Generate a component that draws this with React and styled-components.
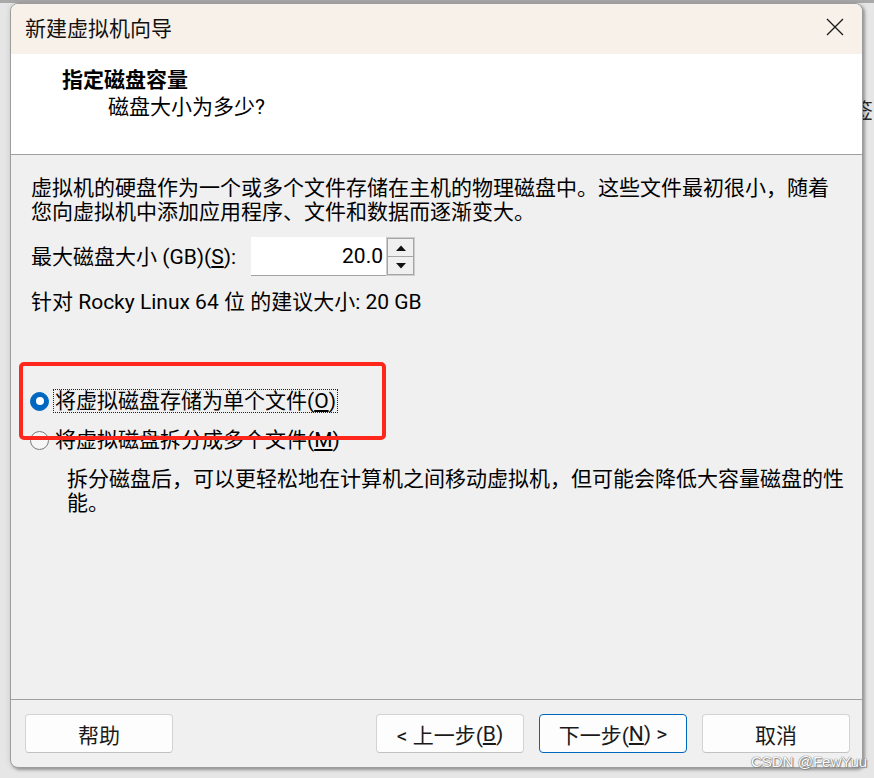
import React from 'react';
import styled, { createGlobalStyle } from 'styled-components';

const Global = createGlobalStyle`
  html, body { margin: 0; padding: 0; background: #e3e3e3; }
  body {
    width: 874px; height: 778px; overflow: hidden;
    font-family: Roboto, "Noto Sans CJK SC", sans-serif;
    -webkit-font-smoothing: antialiased;
  }
`;

const Desktop = styled.div`
  position: relative;
  width: 874px;
  height: 778px;
  box-sizing: border-box;
  padding: 3px 0 0 10px;
  background: linear-gradient(#a9a9a9 0 3px, #e6e6e6 3px);
`;

const BehindText = styled.span`
  position: absolute;
  left: 852px;
  top: 96px;
  font-size: 21px;
  line-height: 26px;
  color: #2a2a2a;
  font-family: "Noto Sans CJK SC", sans-serif;
`;

const Window = styled.div`
  position: relative;
  z-index: 1;
  width: 853px;
  height: 765px;
  box-sizing: border-box;
  border: 1px solid #9d9d9d;
  border-radius: 8px;
  overflow: hidden;
  display: flex;
  flex-direction: column;
  background: #f0f0f0;
  box-shadow: 2px 2px 3px rgba(0, 0, 0, 0.3), 0 0 6px rgba(0, 0, 0, 0.12);
`;

const TitleBar = styled.div`
  height: 50px;
  flex: none;
  box-sizing: border-box;
  display: flex;
  align-items: center;
  padding: 0 4px 4px 14px;
  background: #f8f1ea;
  font-size: 21px;
  color: #111;
`;

const TitleText = styled.span`
  line-height: 26px;
  font-family: "Noto Sans CJK SC", sans-serif;
`;

const CloseBtn = styled.div`
  margin-left: auto;
  width: 46px;
  height: 40px;
  display: flex;
  align-items: center;
  justify-content: center;
`;

const Header = styled.div`
  height: 101px;
  flex: none;
  box-sizing: border-box;
  background: #fff;
  border-bottom: 1px solid #a0a0a0;
  padding: 10px 0 0 51px;
  font-size: 21px;
  color: #000;
`;

const Heading = styled.div`
  font-weight: 700;
  line-height: 29px;
  font-family: "Noto Sans CJK SC", sans-serif;
`;

const SubHeading = styled.div`
  padding-left: 46px;
  line-height: 29px;
`;

const Body = styled.div`
  position: relative;
  flex: 1;
  padding: 21px 0 0 20px;
  font-size: 21px;
  color: #000;
`;

const Para = styled.div`
  line-height: 24px;
  white-space: nowrap;
  margin-top: ${p => p.$mt || 0}px;
  padding-left: ${p => p.$indent || 0}px;
`;

const SizeRow = styled.div`
  display: flex;
  align-items: center;
  margin-top: 13px;
  height: 39px;
`;

const SizeLabel = styled.span`
  width: 220px;
  white-space: nowrap;
  line-height: 24px;
`;

const SpinInput = styled.div`
  width: 135px;
  height: 39px;
  box-sizing: border-box;
  background: #fff;
  border-bottom: 1px solid #a3a3a3;
  display: flex;
  align-items: center;
  justify-content: flex-end;
  padding-right: 3px;
  font-size: 21px;
`;

const SpinButtons = styled.div`
  width: 29px;
  height: 39px;
  box-sizing: border-box;
  border: 1px solid #cdcdcd;
  display: flex;
  flex-direction: column;
`;

const SpinBtn = styled.div`
  flex: 1;
  border: 1px solid #a6a6a6;
  margin-top: ${p => (p.$down ? '-1px' : '0')};
  background: #f0f0f0;
  display: flex;
  align-items: center;
  justify-content: center;
`;

const RadioGroup = styled.div`
  margin-top: 74px;
  display: flex;
  flex-direction: column;
  gap: 13px;
`;

const RadioRow = styled.div`
  display: flex;
  align-items: center;
  height: 26px;
  margin-left: -1px;
`;

const RadioCircle = styled.span`
  width: 19px;
  height: 19px;
  box-sizing: border-box;
  border-radius: 50%;
  flex: none;
  display: flex;
  align-items: center;
  justify-content: center;
  background: ${p => (p.$checked ? '#0067c0' : '#f6f6f6')};
  border: 1px solid ${p => (p.$checked ? '#0067c0' : '#7a7a7a')};
  &::after {
    content: '';
    display: ${p => (p.$checked ? 'block' : 'none')};
    width: 8px;
    height: 8px;
    border-radius: 50%;
    background: #fff;
  }
`;

const RadioLabel = styled.span`
  margin-left: 4px;
  padding: 0 1px;
  line-height: 22px;
  white-space: nowrap;
  border: 1px ${p => (p.$focused ? 'dotted #222' : 'solid transparent')};
`;

const Highlight = styled.div`
  position: absolute;
  left: 8px;
  top: 207px;
  width: 367px;
  height: 78px;
  box-sizing: border-box;
  border: 4px solid #ff261b;
  border-radius: 5px;
  pointer-events: none;
`;

const Footer = styled.div`
  flex: none;
  border-top: 1px solid #a0a0a0;
  padding: 14px 12px 14px 14px;
  display: flex;
  align-items: center;
  gap: 15px;
`;

const Button = styled.button`
  width: 148px;
  height: 39px;
  box-sizing: border-box;
  border: 1px solid ${p => (p.$primary ? '#0067c0' : '#d3d3d3')};
  border-bottom-color: ${p => (p.$primary ? '#0067c0' : '#c2c2c2')};
  border-radius: 4px;
  background: #fdfdfd;
  font-family: Roboto, "Noto Sans CJK SC", sans-serif;
  font-size: 21px;
  color: #1a1a1a;
  padding: 0;
  margin-left: ${p => (p.$push ? 'auto' : '0')};
  display: flex;
  align-items: center;
  justify-content: center;
  white-space: pre;
`;

const Watermark = styled.div`
  position: absolute;
  z-index: 2;
  left: 751px;
  top: 753px;
  font-family: "Liberation Sans", sans-serif;
  font-size: 15px;
  line-height: 18px;
  color: #fff;
  text-shadow: 0 0 1px #6a6a6a, 0 0 1px #6a6a6a, 1px 1px 1px #888;
`;

function CloseIcon() {
  return (
    <svg width="18" height="18" viewBox="0 0 18 18">
      <path d="M1 1 L17 17 M17 1 L1 17" stroke="#1a1a1a" strokeWidth="1.3" fill="none" />
    </svg>
  );
}

function Arrow({ down }) {
  return (
    <svg width="10" height="6" viewBox="0 0 10 6">
      <path d={down ? 'M0 0 H10 L5 5.5 Z' : 'M0 6 H10 L5 0.5 Z'} fill="#111" />
    </svg>
  );
}

export default function App() {
  return (
    <>
      <Global />
      <Desktop>
        <BehindText>签</BehindText>
        <Window>
          <TitleBar>
            <TitleText>新建虚拟机向导</TitleText>
            <CloseBtn>
              <CloseIcon />
            </CloseBtn>
          </TitleBar>
          <Header>
            <Heading>指定磁盘容量</Heading>
            <SubHeading>磁盘大小为多少?</SubHeading>
          </Header>
          <Body>
            <Para>虚拟机的硬盘作为一个或多个文件存储在主机的物理磁盘中。这些文件最初很小，随着</Para>
            <Para>您向虚拟机中添加应用程序、文件和数据而逐渐变大。</Para>
            <SizeRow>
              <SizeLabel>
                最大磁盘大小 (GB)(<u>S</u>):
              </SizeLabel>
              <SpinInput>20.0</SpinInput>
              <SpinButtons>
                <SpinBtn>
                  <Arrow />
                </SpinBtn>
                <SpinBtn $down>
                  <Arrow down />
                </SpinBtn>
              </SpinButtons>
            </SizeRow>
            <Para $mt={14}>针对 Rocky Linux 64 位 的建议大小: 20 GB</Para>
            <RadioGroup>
              <RadioRow>
                <RadioCircle $checked />
                <RadioLabel $focused>
                  将虚拟磁盘存储为单个文件(<u>O</u>)
                </RadioLabel>
              </RadioRow>
              <RadioRow>
                <RadioCircle />
                <RadioLabel>
                  将虚拟磁盘拆分成多个文件(<u>M</u>)
                </RadioLabel>
              </RadioRow>
            </RadioGroup>
            <Para $mt={14} $indent={36}>
              拆分磁盘后，可以更轻松地在计算机之间移动虚拟机，但可能会降低大容量磁盘的性
            </Para>
            <Para $indent={36}>能。</Para>
            <Highlight />
          </Body>
          <Footer>
            <Button>帮助</Button>
            <Button $push>
              {'< 上一步('}<u>B</u>)
            </Button>
            <Button $primary>
              {'下一步('}<u>N</u>{') >'}
            </Button>
            <Button>取消</Button>
          </Footer>
        </Window>
        <Watermark>CSDN @FewYuu</Watermark>
      </Desktop>
    </>
  );
}
